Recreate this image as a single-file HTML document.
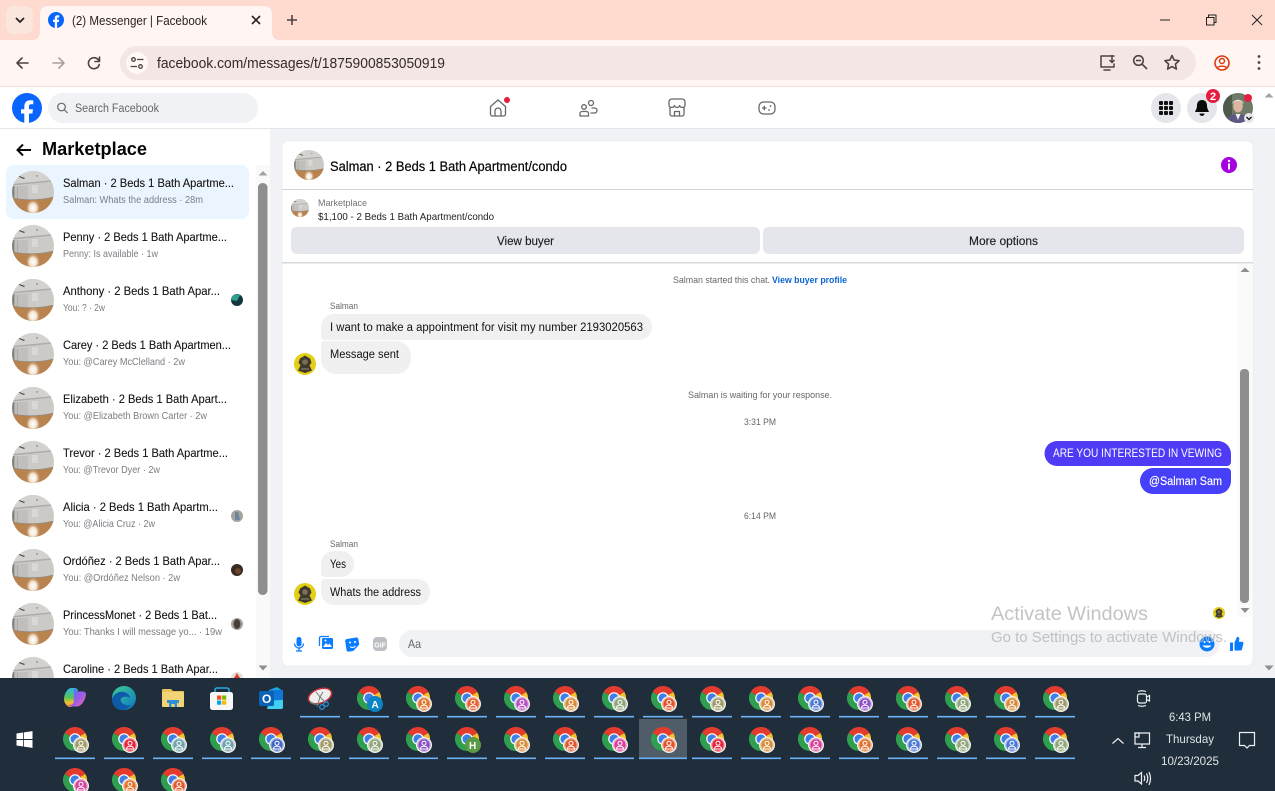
<!DOCTYPE html>
<html><head><meta charset="utf-8"><title>(2) Messenger | Facebook</title>
<style>
html,body{margin:0;padding:0;width:1275px;height:791px;overflow:hidden;background:#fff}
svg{display:block}
text{font-family:"Liberation Sans",sans-serif;fill:#1c1e21}
.t{font-size:12px;fill:#111;stroke:#111;stroke-width:.1px}
.s{font-size:10.5px;fill:#7a7d82}
.g{font-size:9.5px;fill:#65676b}
.m{font-size:11.5px;fill:#111}
.w{font-size:11.5px;fill:#fff}
.b{font-size:11.5px;fill:#1c1e21;stroke:#1c1e21;stroke-width:.15px}
.k{font-size:12px;fill:#dfe3e6}
.ic{fill:none;stroke:#65676b;stroke-width:1.3;stroke-linecap:round;stroke-linejoin:round}
.cr{fill:none;stroke:#4d4341;stroke-width:1.6;stroke-linecap:round;stroke-linejoin:round}
.wh{fill:none;stroke:#eef1f3;stroke-width:1.2}
</style></head><body>
<svg width="1275" height="791" viewBox="0 0 1275 791" xmlns="http://www.w3.org/2000/svg">
<defs>
<clipPath id="cc"><circle cx="21" cy="21" r="21"/></clipPath>
<radialGradient id="glow"><stop offset="0" stop-color="#fff"/><stop offset=".5" stop-color="#f3e4d2"/><stop offset="1" stop-color="#c08e5e" stop-opacity="0"/></radialGradient>
<symbol id="apt" viewBox="0 0 42 42">
<g clip-path="url(#cc)">
<rect width="42" height="42" fill="#cbcac6"/>
<path d="M0 0H42V9L0 13Z" fill="#d3d2cf"/>
<path d="M0 13L42 9V10.500L0 14.500Z" fill="#aeaca8"/>
<rect x="0" y="15" width="2.500" height="13" fill="#85827e"/>
<rect x="3" y="15" width="13" height="13" fill="#c0bfbb"/>
<rect x="5" y="16" width="1" height="11" fill="#a9a8a4"/>
<rect x="20" y="14" width="6" height="8" fill="#d9d8d5"/>
<path d="M7 5l6 2-1 1-5-2z" fill="#4a4a4a"/>
<circle cx="25" cy="5" r=".7" fill="#666"/>
<path d="M0 27Q21 31 42 26V42H0Z" fill="#b8834f"/>
<path d="M0 27Q21 31 42 26" fill="none" stroke="#8b8a86" stroke-width=".8"/>
<ellipse cx="21" cy="37" rx="7.500" ry="9" fill="url(#glow)"/>
</g></symbol>
<symbol id="sal" viewBox="0 0 22 22">
<circle cx="11" cy="11" r="11" fill="#e3cf13"/>
<path d="M11 2.500l5 3 1.500 4-2 3 2.500 5-7 2.500-7-2.500 2.500-5-2-3 1.500-4z" fill="#3f3a30"/>
<circle cx="11" cy="9" r="2.800" fill="#7d6e55"/>
<path d="M7 15h8v2H7z" fill="#6b6250"/>
</symbol>
<symbol id="c" viewBox="0 0 32 32">
<path d="M12 12L1.6 6A12 12 0 0 1 22.4 6Z" fill="#e33b2e"/>
<path d="M12 12L22.4 6A12 12 0 0 1 12 24Z" fill="#f5c02c"/>
<path d="M12 12L12 24A12 12 0 0 1 1.6 6Z" fill="#2f9e4f"/>
<circle cx="12" cy="12" r="5.8" fill="#fff"/>
<circle cx="12" cy="12" r="4.6" fill="#3f7fe8"/>
<circle cx="18" cy="18" r="8" fill="#f4f1ea"/>
<circle cx="18" cy="18" r="6.6" fill="currentColor"/>
<circle cx="18" cy="16.2" r="2" fill="none" stroke="#fff" stroke-width="1"/>
<path d="M14.5 22c0-2 1.5-2.7 3.5-2.7s3.5.7 3.5 2.7z" fill="none" stroke="#fff" stroke-width="1"/>
<circle cx="18" cy="18" r="6" fill="none" stroke="#fff" stroke-width=".6" opacity=".7"/>
</symbol>
<symbol id="c0" viewBox="0 0 32 32">
<path d="M12 12L1.6 6A12 12 0 0 1 22.4 6Z" fill="#e33b2e"/>
<path d="M12 12L22.4 6A12 12 0 0 1 12 24Z" fill="#f5c02c"/>
<path d="M12 12L12 24A12 12 0 0 1 1.6 6Z" fill="#2f9e4f"/>
<circle cx="12" cy="12" r="5.8" fill="#fff"/>
<circle cx="12" cy="12" r="4.6" fill="#3f7fe8"/>
</symbol>
<linearGradient id="cp" x1="0" y1="0" x2="0" y2="1"><stop offset="0" stop-color="#2fb5e8"/><stop offset=".5" stop-color="#58c45a"/><stop offset=".75" stop-color="#f0c22f"/><stop offset="1" stop-color="#f08a3a"/></linearGradient>
<linearGradient id="cp2" x1="0" y1="0" x2="1" y2="1"><stop offset="0" stop-color="#3a7bf0"/><stop offset=".55" stop-color="#9c5ae8"/><stop offset="1" stop-color="#f0709a"/></linearGradient>
<linearGradient id="ed" x1="0" y1="0" x2="1" y2="1"><stop offset="0" stop-color="#3ed08f"/><stop offset="1" stop-color="#0d73c8"/></linearGradient>
</defs>

<!-- browser chrome -->
<rect width="1275" height="40" fill="#ffdbcf"/>
<rect y="40" width="1275" height="46" fill="#fff5f2"/>
<rect y="86" width="1275" height="1" fill="#f8ddd5"/>
<rect x="6" y="6" width="27" height="28" rx="8" fill="#fbe6de"/>
<path d="M16 18l4 4 4-4" fill="none" stroke="#2a2220" stroke-width="1.8"/>
<path d="M32 40Q40 40 40 32V14Q40 6 48 6H264Q272 6 272 14V32Q272 40 280 40Z" fill="#fff5f2"/>
<circle cx="56" cy="20" r="8" fill="#0866ff"/>
<path d="M54.8 28V22H53V19.6H54.8V18.2C54.8 16.2 56 15.2 57.6 15.2L59.2 15.3V17.4H58.2C57.3 17.4 57.1 17.9 57.1 18.5V19.6H59.1L58.8 22H57.1V28Z" fill="#fff"/>
<text x="72" y="25" font-size="13" textLength="135" lengthAdjust="spacingAndGlyphs" style="fill:#2b2322">(2) Messenger | Facebook</text>
<path d="M252 16l8 8M260 16l-8 8" stroke="#2a2220" stroke-width="1.6"/>
<path d="M292 15v10M287 20h10" stroke="#4d4341" stroke-width="1.6"/>
<path d="M1160 20h10" stroke="#222" stroke-width="1"/>
<path d="M1206.500 17.500h7.500v7.500h-7.500zM1208.500 17.500v-2.500h7.500v7.500h-2" fill="none" stroke="#222" stroke-width="1"/>
<path d="M1252 15l10 10M1262 15l-10 10" stroke="#222" stroke-width="1"/>

<path class="cr" d="M28 63H17M22 58l-5 5 5 5"/>
<path d="M53 63h11M59 58l5 5-5 5" fill="none" stroke="#ab9f9c" stroke-width="1.6" stroke-linecap="round" stroke-linejoin="round"/>
<path class="cr" d="M99 61a5.500 5.500 0 1 0 .3 3.500M99.500 57v4.500H95"/>
<rect x="120" y="46" width="1076" height="34" rx="17" fill="#f3e6e5"/>
<circle cx="137" cy="63" r="11" fill="#fff8f5"/>
<circle cx="133.500" cy="59.500" r="1.800" fill="none" stroke="#4d4341" stroke-width="1.300"/>
<circle cx="140.500" cy="66.500" r="1.800" fill="none" stroke="#4d4341" stroke-width="1.300"/>
<path d="M137 59.500h6.500M130.500 66.500H137" stroke="#4d4341" stroke-width="1.300"/>
<text x="157" y="68" font-size="14.500" textLength="288" lengthAdjust="spacingAndGlyphs" style="fill:#332b2a">facebook.com/messages/t/1875900853050919</text>
<path class="cr" d="M1114 56h-13v11h13v-3M1104 70h6" style="stroke-width:1.500"/>
<path d="M1112 55v7M1109.500 60l2.500 2.500 2.500-2.500" fill="none" stroke="#4d4341" stroke-width="1.500"/>
<circle cx="1138.500" cy="60.500" r="4.800" fill="none" stroke="#4d4341" stroke-width="1.600"/>
<path d="M1142 64l5 5M1136 60.500h5" stroke="#4d4341" stroke-width="1.600"/>
<path class="cr" d="M1172 55.500l2.100 4.600 5 .6-3.700 3.400 1 5-4.400-2.500-4.400 2.500 1-5-3.700-3.400 5-.6z"/>
<circle cx="1222" cy="63" r="7" fill="none" stroke="#dd3a10" stroke-width="1.600"/>
<circle cx="1222" cy="61" r="2.500" fill="none" stroke="#dd3a10" stroke-width="1.400"/>
<path d="M1217.500 67.500c2-1.800 7-1.800 9 0" fill="none" stroke="#dd3a10" stroke-width="1.400"/>
<circle cx="1259" cy="56.500" r="1.400" fill="#4d4341"/><circle cx="1259" cy="62.500" r="1.400" fill="#4d4341"/><circle cx="1259" cy="68.500" r="1.400" fill="#4d4341"/>

<!-- fb topbar -->
<rect y="87" width="1275" height="41" fill="#fff"/>
<rect y="128" width="1275" height="1" fill="#e4e6eb"/>
<circle cx="27" cy="108" r="15" fill="#0866ff"/>
<path d="M24.300 123V113.500H21V109.200H24.300V106.500C24.300 102.400 26.700 100.200 30.200 100.200L33.300 100.400V104.200H31.300C29.500 104.200 29 105.200 29 106.500V109.200H33L32.400 113.500H29V123Z" fill="#fff"/>
<rect x="48" y="93" width="210" height="30" rx="15" fill="#f0f2f5"/>
<circle cx="61.500" cy="107" r="3.800" fill="none" stroke="#65676b" stroke-width="1.200"/>
<path d="M64.500 110l3 3" stroke="#65676b" stroke-width="1.200"/>
<text x="75" y="112" font-size="11.500" textLength="84" lengthAdjust="spacingAndGlyphs" style="fill:#65676b">Search Facebook</text>
<!-- nav icons -->
<path class="ic" d="M490.500 106.500l7.500-6.500 7.500 6.500V114a2 2 0 0 1-2 2h-11a2 2 0 0 1-2-2zM495 116v-5a3 3 0 0 1 6 0v5"/>
<circle cx="507" cy="100" r="3" fill="#e41e3f"/>
<circle cx="591" cy="103" r="2.500" class="ic"/>
<circle cx="584" cy="107" r="2.300" class="ic"/>
<path class="ic" d="M580 116v-2.500a2 2 0 0 1 2-2h4.500a2 2 0 0 1 2 2V116zM592 108h2.500a2 2 0 0 1 0 5H591"/>
<path class="ic" d="M669 105.500v-3.500a3 3 0 0 1 3-3h10a3 3 0 0 1 3 3v3.500c0 2.500-5.300 2.500-5.300 0 0 2.500-5.400 2.500-5.400 0 0 2.500-5.300 2.500-5.300 0zM670 108v6a2 2 0 0 0 2 2h10a2 2 0 0 0 2-2v-6M674.500 116v-4.500h5v4.500"/>
<rect x="759" y="102" width="16" height="12" rx="4.500" class="ic"/>
<path d="M762 108h4.500M764.300 105.700v4.600" stroke="#65676b" stroke-width="1.300"/>
<circle cx="770.500" cy="106" r=".9" fill="#65676b"/><circle cx="769" cy="110" r=".9" fill="#65676b"/>
<circle cx="1166" cy="108" r="15" fill="#e4e6eb"/>
<g fill="#111"><rect x="1159" y="101" width="4" height="4" rx="1"/><rect x="1164" y="101" width="4" height="4" rx="1"/><rect x="1169" y="101" width="4" height="4" rx="1"/><rect x="1159" y="106" width="4" height="4" rx="1"/><rect x="1164" y="106" width="4" height="4" rx="1"/><rect x="1169" y="106" width="4" height="4" rx="1"/><rect x="1159" y="111" width="4" height="4" rx="1"/><rect x="1164" y="111" width="4" height="4" rx="1"/><rect x="1169" y="111" width="4" height="4" rx="1"/></g>
<circle cx="1202" cy="108" r="15" fill="#e4e6eb"/>
<path d="M1202 100c-3.500 0-5 2.500-5 5.500 0 3-1.500 5-2 6.500h14c-.5-1.500-2-3.500-2-6.500 0-3-1.500-5.500-5-5.500zM1199.500 113.500a2.500 2.500 0 0 0 5 0z" fill="#0a0a0a"/>
<circle cx="1213" cy="96" r="7" fill="#e41e3f"/>
<text x="1210" y="100" font-size="11" font-weight="bold" style="fill:#fff">2</text>
<clipPath id="pf"><circle cx="1238" cy="108" r="15"/></clipPath>
<g clip-path="url(#pf)">
<rect x="1223" y="93" width="30" height="30" fill="#6f7a68"/>
<rect x="1223" y="93" width="9" height="30" fill="#4e5a4a"/>
<path d="M1226 123q1-9 12-9t12 9z" fill="#5c5a85"/>
<path d="M1235.500 114l2.500 6 2.500-6z" fill="#eee"/>
<ellipse cx="1238" cy="106" rx="4.800" ry="6.500" fill="#dcb5a0"/>
<path d="M1233 104c0-4 10-4 10 0l.5-1c-1-4-10-4-11 0z" fill="#e6e2dc"/>
</g>
<circle cx="1248" cy="98" r="4" fill="#e41e3f"/>
<circle cx="1249" cy="118" r="5" fill="#e4e6eb"/>
<path d="M1246.500 117l2.500 2.500 2.500-2.500" fill="none" stroke="#111" stroke-width="1.300"/>

<!-- page bg -->
<rect y="129" width="1275" height="549" fill="#f1f2f6"/>
<rect x="1263" y="87" width="12" height="41" fill="#fff"/>
<path d="M1269 93l4.500 4.500h-9z" fill="#a3a3a3"/>
<path d="M1264.500 665.500h9l-4.500 5z" fill="#8f8f8f"/>

<!-- sidebar -->
<rect y="129" width="270" height="549" fill="#fff"/>
<path d="M31 150H18M23 144.500L17.500 150l5.500 5.500" fill="none" stroke="#0a0a0a" stroke-width="2"/>
<text x="42" y="155" font-size="18.500" font-weight="bold" textLength="105" lengthAdjust="spacingAndGlyphs" style="fill:#050505">Marketplace</text>
<rect x="6" y="165" width="243" height="54" rx="8" fill="#ebf5ff"/>
<rect x="256" y="165" width="14" height="513" fill="#f9f9f9"/>
<path d="M263 171l4.500 4.500h-9z" fill="#a3a3a3"/>
<rect x="258" y="183" width="9.500" height="412" rx="4.500" fill="#8e8e8e"/>
<path d="M258.500 665.500h9l-4.500 5z" fill="#8f8f8f"/>

<use href="#apt" x="12" y="171" width="42" height="42"/>
<use href="#apt" x="12" y="225" width="42" height="42"/>
<use href="#apt" x="12" y="279" width="42" height="42"/>
<use href="#apt" x="12" y="333" width="42" height="42"/>
<use href="#apt" x="12" y="387" width="42" height="42"/>
<use href="#apt" x="12" y="441" width="42" height="42"/>
<use href="#apt" x="12" y="495" width="42" height="42"/>
<use href="#apt" x="12" y="549" width="42" height="42"/>
<use href="#apt" x="12" y="603" width="42" height="42"/>
<use href="#apt" x="12" y="657" width="42" height="42"/>

<text class="t" x="63" y="187" textLength="171" lengthAdjust="spacingAndGlyphs">Salman · 2 Beds 1 Bath Apartme...</text>
<text class="s" x="63" y="203" textLength="140" lengthAdjust="spacingAndGlyphs">Salman: Whats the address · 28m</text>
<text class="t" x="63" y="241" textLength="164" lengthAdjust="spacingAndGlyphs">Penny · 2 Beds 1 Bath Apartme...</text>
<text class="s" x="63" y="257" textLength="95" lengthAdjust="spacingAndGlyphs">Penny: Is available · 1w</text>
<text class="t" x="63" y="295" textLength="157" lengthAdjust="spacingAndGlyphs">Anthony · 2 Beds 1 Bath Apar...</text>
<text class="s" x="63" y="311" textLength="42" lengthAdjust="spacingAndGlyphs">You: ? · 2w</text>
<text class="t" x="63" y="349" textLength="168" lengthAdjust="spacingAndGlyphs">Carey · 2 Beds 1 Bath Apartmen...</text>
<text class="s" x="63" y="365" textLength="122" lengthAdjust="spacingAndGlyphs">You: @Carey McClelland · 2w</text>
<text class="t" x="63" y="403" textLength="164" lengthAdjust="spacingAndGlyphs">Elizabeth · 2 Beds 1 Bath Apart...</text>
<text class="s" x="63" y="419" textLength="144" lengthAdjust="spacingAndGlyphs">You: @Elizabeth Brown Carter · 2w</text>
<text class="t" x="63" y="457" textLength="165" lengthAdjust="spacingAndGlyphs">Trevor · 2 Beds 1 Bath Apartme...</text>
<text class="s" x="63" y="473" textLength="97" lengthAdjust="spacingAndGlyphs">You: @Trevor Dyer · 2w</text>
<text class="t" x="63" y="511" textLength="155" lengthAdjust="spacingAndGlyphs">Alicia · 2 Beds 1 Bath Apartm...</text>
<text class="s" x="63" y="527" textLength="92" lengthAdjust="spacingAndGlyphs">You: @Alicia Cruz · 2w</text>
<text class="t" x="63" y="565" textLength="157" lengthAdjust="spacingAndGlyphs">Ordóñez · 2 Beds 1 Bath Apar...</text>
<text class="s" x="63" y="581" textLength="117" lengthAdjust="spacingAndGlyphs">You: @Ordóñez Nelson · 2w</text>
<text class="t" x="63" y="619" textLength="154" lengthAdjust="spacingAndGlyphs">PrincessMonet · 2 Beds 1 Bat...</text>
<text class="s" x="63" y="635" textLength="159" lengthAdjust="spacingAndGlyphs">You: Thanks I will message yo...  · 19w</text>
<text class="t" x="63" y="673" textLength="155" lengthAdjust="spacingAndGlyphs">Caroline · 2 Beds 1 Bath Apar...</text>

<circle cx="237" cy="300" r="6" fill="#14363d"/><path d="M231 300a6 6 0 0 1 9-5l-3 6z" fill="#2fa08f"/>
<circle cx="237" cy="516" r="6" fill="#a8a39a"/><path d="M235 512h3l2 8h-5z" fill="#6a86a0"/>
<circle cx="237" cy="570" r="6" fill="#3a2a20"/><circle cx="238" cy="571" r="3" fill="#6a4630"/>
<circle cx="237" cy="624" r="6" fill="#a8a39e"/><ellipse cx="237" cy="624" rx="3.500" ry="5" fill="#4a403a"/>
<circle cx="237" cy="678" r="6" fill="#e8e0d8"/><path d="M237 673l3 5h-6z" fill="#d8402a"/>

<!-- main panel -->
<rect x="282" y="141" width="971" height="525" rx="6" fill="#fff" stroke="#e6e8ec" stroke-width=".6"/>
<rect x="282" y="189" width="971" height="1" fill="#d3d5d8"/>
<rect x="282" y="262" width="971" height="1.500" fill="#d6d8db"/>
<use href="#apt" x="294" y="150" width="30" height="30"/>
<text x="330" y="171" font-size="13.500" textLength="237" lengthAdjust="spacingAndGlyphs" style="fill:#050505;stroke:#050505;stroke-width:.2px">Salman · 2 Beds 1 Bath Apartment/condo</text>
<circle cx="1229" cy="165" r="8" fill="#a400e0"/>
<circle cx="1229" cy="161" r="1.200" fill="#fff"/><rect x="1228" y="163.500" width="2" height="6" fill="#fff"/>
<use href="#apt" x="291" y="199" width="18" height="18"/>
<text x="318" y="206" font-size="9.500" textLength="49" lengthAdjust="spacingAndGlyphs" style="fill:#6f7276">Marketplace</text>
<text x="318" y="220" font-size="10.500" textLength="176" lengthAdjust="spacingAndGlyphs" style="fill:#1c1e21">$1,100 - 2 Beds 1 Bath Apartment/condo</text>
<rect x="291" y="227" width="469" height="27" rx="6" fill="#e4e6eb"/>
<rect x="763" y="227" width="481" height="27" rx="6" fill="#e4e6eb"/>
<text class="b" x="497" y="245" textLength="57" lengthAdjust="spacingAndGlyphs">View buyer</text>
<text class="b" x="969" y="245" textLength="69" lengthAdjust="spacingAndGlyphs">More options</text>
<rect x="1237" y="264" width="16" height="353" fill="#fafafa"/>
<path d="M1245 267.500l4.500 4.500h-9z" fill="#8f8f8f"/>
<rect x="1240" y="369" width="9" height="234" rx="4" fill="#8e8e8e"/>
<path d="M1240.500 608h9l-4.500 5z" fill="#8f8f8f"/>

<text class="g" x="673" y="283" textLength="97" lengthAdjust="spacingAndGlyphs">Salman started this chat.</text>
<text x="772" y="283" font-size="9.500" font-weight="bold" textLength="75" lengthAdjust="spacingAndGlyphs" style="fill:#0a64d0">View buyer profile</text>
<text class="g" x="330" y="309" textLength="28" lengthAdjust="spacingAndGlyphs">Salman</text>
<path d="M334 314H639a13 13 0 0 1 0 26H325a4 4 0 0 1-4-4V327A13 13 0 0 1 334 314Z" fill="#f0f0f0"/>
<text class="m" x="330" y="331" textLength="313" lengthAdjust="spacingAndGlyphs">I want to make a appointment for visit my number 2193020563</text>
<path d="M325 341H396a15 15 0 0 1 15 15V359a15 15 0 0 1-15 15H336a15 15 0 0 1-15-15V345a4 4 0 0 1 4-4Z" fill="#f0f0f0"/>
<text class="m" x="330" y="358" textLength="69" lengthAdjust="spacingAndGlyphs">Message sent</text>
<use href="#sal" x="294" y="353" width="22" height="22"/>
<text class="g" x="688" y="398" textLength="144" lengthAdjust="spacingAndGlyphs">Salman is waiting for your response.</text>
<text class="g" x="744" y="425" textLength="32" lengthAdjust="spacingAndGlyphs">3:31 PM</text>
<path d="M1057 441H1218a13 13 0 0 1 13 13V462a4 4 0 0 1-4 4H1057a12.500 12.500 0 0 1 0-25Z" fill="#4f3bf6"/>
<text class="w" x="1053" y="457" textLength="169" lengthAdjust="spacingAndGlyphs">ARE YOU INTERESTED IN VEWING</text>
<path d="M1153 468H1227a4 4 0 0 1 4 4V481a13 13 0 0 1-13 13H1153a13 13 0 0 1 0-26Z" fill="#4641f8"/>
<text class="w" x="1149" y="485" textLength="73" lengthAdjust="spacingAndGlyphs" style="stroke:#fff;stroke-width:.15px">@Salman Sam</text>
<text class="g" x="744" y="519" textLength="32" lengthAdjust="spacingAndGlyphs">6:14 PM</text>
<text class="g" x="330" y="547" textLength="28" lengthAdjust="spacingAndGlyphs">Salman</text>
<path d="M334 551H341a13 13 0 0 1 13 13a13 13 0 0 1-13 13H325a4 4 0 0 1-4-4V564A13 13 0 0 1 334 551Z" fill="#f0f0f0"/>
<text class="m" x="330" y="568" textLength="16" lengthAdjust="spacingAndGlyphs">Yes</text>
<path d="M325 579H417a13 13 0 0 1 0 26H334a13 13 0 0 1-13-13V583a4 4 0 0 1 4-4Z" fill="#f0f0f0"/>
<text class="m" x="330" y="596" textLength="91" lengthAdjust="spacingAndGlyphs">Whats the address</text>
<use href="#sal" x="294" y="583" width="22" height="22"/>
<use href="#sal" x="1213" y="607" width="12" height="12"/>

<!-- composer -->
<rect x="296.500" y="637" width="5" height="9.500" rx="2.500" fill="#0a7cff"/>
<path d="M294.500 643.500a4.500 4.500 0 0 0 9 0M299 648v2.500M296 651h6" fill="none" stroke="#0a7cff" stroke-width="1.300"/>
<rect x="321" y="638" width="11" height="11" rx="1.500" fill="#0a7cff" transform="translate(1 0)"/>
<path d="M319.500 646v-8a1.500 1.500 0 0 1 1.500-1.500h8" fill="none" stroke="#0a7cff" stroke-width="1.300"/>
<path d="M323 647l3-4 2 2 1.500-1.500 2.500 3.500z" fill="#fff"/><circle cx="325.500" cy="640.500" r="1" fill="#fff"/>
<path d="M347 639l9-1.500a2 2 0 0 1 2.300 1.600l1 5.400-6 6.500-4.500.6a2 2 0 0 1-2.300-1.600l-1.200-8.300a2 2 0 0 1 1.700-2.700z" fill="#0a7cff"/>
<circle cx="350" cy="642.500" r="1" fill="#fff"/><circle cx="355" cy="642" r="1" fill="#fff"/><path d="M350 646.500c1.500 1.500 4 1.200 5.500-.5" fill="none" stroke="#fff" stroke-width="1"/>
<rect x="373" y="637" width="14" height="14" rx="4" fill="#bcc0c4"/>
<text x="374.300" y="647.500" font-size="7.500" font-weight="bold" textLength="11.500" lengthAdjust="spacingAndGlyphs" style="fill:#fff">GIF</text>
<rect x="399" y="630" width="821" height="27" rx="13.500" fill="#f0f2f5"/>
<text x="408" y="648" font-size="12" textLength="13" lengthAdjust="spacingAndGlyphs" style="fill:#65676b">Aa</text>
<circle cx="1207" cy="644" r="7.500" fill="#0a7cff"/>
<circle cx="1204.500" cy="642" r="1" fill="#fff"/><circle cx="1209.500" cy="642" r="1" fill="#fff"/>
<path d="M1202.500 645.500c2 3 7 3 9 0z" fill="#fff"/>
<path d="M1230 642.500h3v8.500h-3zM1234.500 642.500l2.500-5.500c1.500-.5 2.500.5 2.300 2l-.5 2.700h3.200c1 0 1.700 1 1.400 2l-1.500 5.800c-.2.600-.7 1-1.400 1h-6z" fill="#0a7cff"/>

<text x="991" y="620" font-size="19" textLength="157" lengthAdjust="spacingAndGlyphs" style="fill:#b9b9b9;fill-opacity:.85">Activate Windows</text>
<text x="991" y="642" font-size="14.500" textLength="236" lengthAdjust="spacingAndGlyphs" style="fill:#b9b9b9;fill-opacity:.85">Go to Settings to activate Windows.</text>

<!-- taskbar -->
<rect y="678" width="1275" height="113" fill="#1f2e3a"/>
<g fill="#fff"><path d="M16.500 733.500l6.700-1v6.500h-6.700zM24 732.400l8.500-1.300v7.900H24zM16.500 740h6.700v6.500l-6.700-1zM24 740h8.500v7.900l-8.500-1.300z"/></g>
<rect x="639" y="719" width="48" height="39" fill="#4f5d69"/>

<!-- pinned -->
<path d="M64 699c0-3 1-6 3-8.500 1.500-2 3-2.500 5-2.500h3c1.500 0 2.500 1 3 2.500l-3 12c-.5 2-2 4-4 4.500-1 .2-2 0-3-.5-2-1.500-4-4-4-7.500z" fill="url(#cp)"/>
<path d="M74 688.500c1.500 0 3 1 3.300 3l-1 .5c3-.5 6-1 8.500 0 1 .5 1.500 2 1 3.500-.5 3-2 6.500-4 8.500-1.500 1.500-3 2.500-5 2.500h-5c-1.500 0-2.500-.5-3-1.500 2 .5 4-.5 5-3z" fill="url(#cp2)"/>
<circle cx="124" cy="698" r="12" fill="url(#ed)"/>
<path d="M112 699c2-6 8-8 12-7 4 1 6 4 6 6-1-1-4-2-7-1-3 1-3 4-1 6 2 2 6 3 9 2-2 3-5 5-9 5-6 0-10-5-10-11z" fill="#0c5aa8"/>
<path d="M163 689h8l2 2h10a1 1 0 0 1 1 1v14a1 1 0 0 1-1 1h-20a1 1 0 0 1-1-1v-16a1 1 0 0 1 1-1z" fill="#e8c05a"/>
<path d="M162 692h22v14a1 1 0 0 1-1 1h-20a1 1 0 0 1-1-1z" fill="#f2d375"/>
<path d="M167 700h12v3h-2v4h-2.500v-3h-3v3H169v-4h-2z" fill="#2f8fd8"/>
<path d="M215 692v-2a2 2 0 0 1 2-2h10a2 2 0 0 1 2 2v2" fill="none" stroke="#29a8e8" stroke-width="1.600"/>
<rect x="210" y="692" width="23" height="18" rx="2.500" fill="#f7f7f7"/>
<rect x="217" y="695.500" width="4.200" height="4.200" fill="#f25022"/><rect x="222" y="695.500" width="4.200" height="4.200" fill="#7fba00"/><rect x="217" y="700.500" width="4.200" height="4.200" fill="#00a4ef"/><rect x="222" y="700.500" width="4.200" height="4.200" fill="#ffb900"/>
<path d="M269 690l8-3 6 4v16a2 2 0 0 1-2 2h-12z" fill="#1ea7e0"/>
<path d="M270 690h13v10h-13z" fill="#0f78d4"/>
<path d="M269 701l14-1v7a2 2 0 0 1-2 2h-14z" fill="#40d0f0"/>
<rect x="259" y="691" width="15" height="15" rx="1.500" fill="#0a62b8"/>
<text x="262" y="703" font-size="12" font-weight="bold" style="fill:#fff">O</text>
<ellipse cx="320" cy="696" rx="12" ry="7" fill="#eee" stroke="#c62f3a" stroke-width="1.500" transform="rotate(-20 320 696)"/>
<path d="M316 692l4 5 3-5M320 697l6 6M320 697l-3 10" stroke="#777" stroke-width="1" fill="none"/>
<circle cx="326" cy="704" r="2.300" fill="none" stroke="#2b8ed6" stroke-width="1.300"/><circle cx="322" cy="707" r="2.300" fill="none" stroke="#2b8ed6" stroke-width="1.300"/>
<path d="M310 702q5 3 9 2" stroke="#777" stroke-width="1.500" fill="none"/>

<use href="#c0" x="357" y="686" width="32" height="32"/>
<circle cx="375" cy="704" r="8" fill="#0b84c6"/>
<text x="371.500" y="708" font-size="10" font-weight="bold" style="fill:#fff">A</text>
<use href="#c" x="406" y="686" width="32" height="32" color="#e0752c"/>
<use href="#c" x="455" y="686" width="32" height="32" color="#e4602e"/>
<use href="#c" x="504" y="686" width="32" height="32" color="#b64fc2"/>
<use href="#c" x="553" y="686" width="32" height="32" color="#dc8a3a"/>
<use href="#c" x="602" y="686" width="32" height="32" color="#8ea67a"/>
<use href="#c" x="651" y="686" width="32" height="32" color="#e4542a"/>
<use href="#c" x="700" y="686" width="32" height="32" color="#a09a68"/>
<use href="#c" x="749" y="686" width="32" height="32" color="#d98a35"/>
<use href="#c" x="798" y="686" width="32" height="32" color="#4a78d8"/>
<use href="#c" x="847" y="686" width="32" height="32" color="#8a4fc8"/>
<use href="#c" x="896" y="686" width="32" height="32" color="#e4572a"/>
<use href="#c" x="945" y="686" width="32" height="32" color="#8ea67a"/>
<use href="#c" x="994" y="686" width="32" height="32" color="#d98a35"/>
<use href="#c" x="1043" y="686" width="32" height="32" color="#a09a68"/>

<use href="#c" x="63" y="727" width="32" height="32" color="#a09a68"/>
<use href="#c" x="112" y="727" width="32" height="32" color="#e8203c"/>
<use href="#c" x="161" y="727" width="32" height="32" color="#6fa3ad"/>
<use href="#c" x="210" y="727" width="32" height="32" color="#6fa3ad"/>
<use href="#c" x="259" y="727" width="32" height="32" color="#4468c8"/>
<use href="#c" x="308" y="727" width="32" height="32" color="#a09a68"/>
<use href="#c" x="357" y="727" width="32" height="32" color="#8ea67a"/>
<use href="#c" x="406" y="727" width="32" height="32" color="#8a4fc8"/>
<use href="#c0" x="455" y="727" width="32" height="32"/>
<circle cx="473" cy="745" r="8" fill="#5a9a45"/>
<text x="469" y="749" font-size="10" font-weight="bold" style="fill:#fff">H</text>
<use href="#c" x="504" y="727" width="32" height="32" color="#d98a35"/>
<use href="#c" x="553" y="727" width="32" height="32" color="#e4572a"/>
<use href="#c" x="602" y="727" width="32" height="32" color="#d9409a"/>
<use href="#c" x="651" y="727" width="32" height="32" color="#e4542a"/>
<use href="#c" x="700" y="727" width="32" height="32" color="#e8203c"/>
<use href="#c" x="749" y="727" width="32" height="32" color="#d98a35"/>
<use href="#c" x="798" y="727" width="32" height="32" color="#d9409a"/>
<use href="#c" x="847" y="727" width="32" height="32" color="#e4702a"/>
<use href="#c" x="896" y="727" width="32" height="32" color="#4a78d8"/>
<use href="#c" x="945" y="727" width="32" height="32" color="#8ea67a"/>
<use href="#c" x="994" y="727" width="32" height="32" color="#4a78d8"/>
<use href="#c" x="1043" y="727" width="32" height="32" color="#8ea67a"/>
<use href="#c" x="63" y="768" width="32" height="32" color="#d9409a"/>
<use href="#c" x="112" y="768" width="32" height="32" color="#e4702a"/>
<use href="#c" x="161" y="768" width="32" height="32" color="#e4572a"/>

<!-- underlines -->
<path stroke="#6cb0f5" stroke-width="1.600" fill="none" d="M300 716.700h40M349 716.700h40M398 716.700h40M447 716.700h40M496 716.700h40M545 716.700h40M594 716.700h40M643 716.700h40M692 716.700h40M741 716.700h40M790 716.700h40M839 716.700h40M888 716.700h40M937 716.700h40M986 716.700h40M1035 716.700h40M55 758.300h40M104 758.300h40M153 758.300h40M202 758.300h40M251 758.300h40M300 758.300h40M349 758.300h40M398 758.300h40M447 758.300h40M496 758.300h40M545 758.300h40M594 758.300h40M639 758.300h48M692 758.300h40M741 758.300h40M790 758.300h40M839 758.300h40M888 758.300h40M937 758.300h40M986 758.300h40M1035 758.300h40"/>

<!-- tray -->
<rect x="1137.500" y="694" width="9" height="9" rx="2" class="wh"/>
<path class="wh" d="M1146.500 697l3-1.500v5.500l-3-1.500M1138 691.500q4-1.500 8 0M1138 705.500q4 1.500 8 0"/>
<text class="k" x="1169" y="721" textLength="42" lengthAdjust="spacingAndGlyphs">6:43 PM</text>
<text class="k" x="1166" y="743" textLength="48" lengthAdjust="spacingAndGlyphs">Thursday</text>
<text class="k" x="1161" y="765" textLength="58" lengthAdjust="spacingAndGlyphs">10/23/2025</text>
<path class="wh" d="M1112.500 743.500l5.500-5 5.500 5"/>
<path class="wh" d="M1135 733h14.500v11H1135zM1135 733v11M1142 744v3.500M1138 747.500h8"/>
<rect x="1135" y="733" width="4" height="4" class="wh"/>
<path class="wh" d="M1239.500 732.500h15v13h-5l-2.500 2.500-2.500-2.500h-5z"/>
<path class="wh" d="M1135 775.500h3l3.500-3v11.500l-3.500-3h-3zM1144 775.500q1.500 2.800 0 5.500M1146.500 773.500q2.500 4.800 0 9.500M1149 772q3 6.500 0 13"/>
</svg>
</body></html>
